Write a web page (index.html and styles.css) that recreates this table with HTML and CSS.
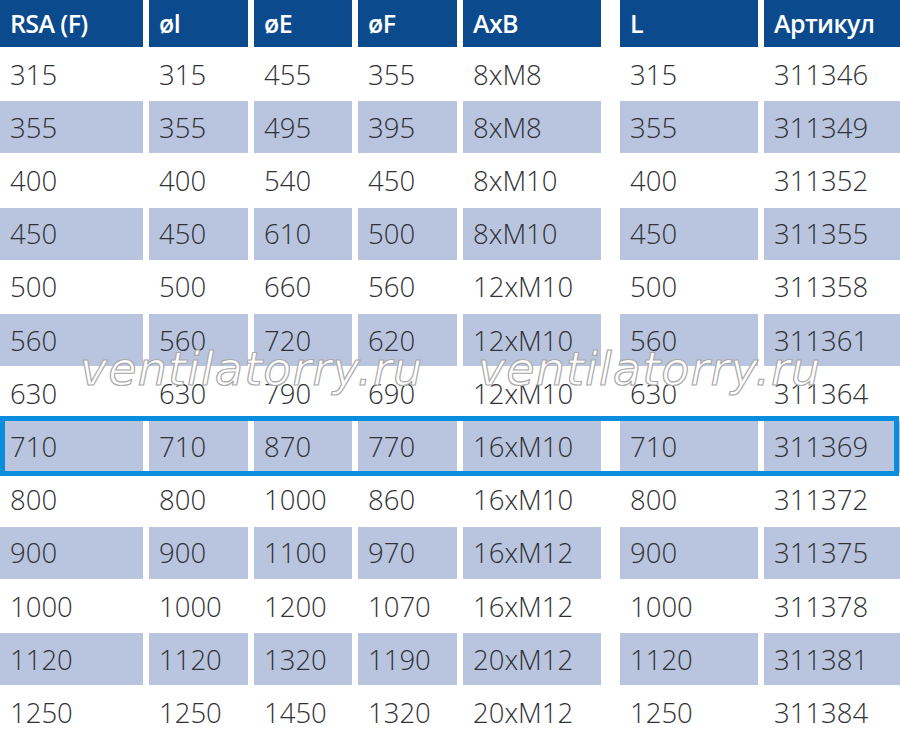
FILE: index.html
```html
<!DOCTYPE html>
<html lang="ru">
<head>
<meta charset="utf-8">
<link rel="stylesheet" href="styles.css">
</head>
<body>
<div class="table">
  <div class="row head">
    <div class="cell">RSA (F)</div><div class="cell">øl</div><div class="cell">øE</div><div class="cell">øF</div><div class="cell">AxB</div><div class="cell gapped">L</div><div class="cell">Артикул</div>
  </div>
  <div class="row"><div class="cell">315</div><div class="cell">315</div><div class="cell">455</div><div class="cell">355</div><div class="cell">8xM8</div><div class="cell gapped">315</div><div class="cell">311346</div></div>
  <div class="row alt"><div class="cell">355</div><div class="cell">355</div><div class="cell">495</div><div class="cell">395</div><div class="cell">8xM8</div><div class="cell gapped">355</div><div class="cell">311349</div></div>
  <div class="row"><div class="cell">400</div><div class="cell">400</div><div class="cell">540</div><div class="cell">450</div><div class="cell">8xM10</div><div class="cell gapped">400</div><div class="cell">311352</div></div>
  <div class="row alt"><div class="cell">450</div><div class="cell">450</div><div class="cell">610</div><div class="cell">500</div><div class="cell">8xM10</div><div class="cell gapped">450</div><div class="cell">311355</div></div>
  <div class="row"><div class="cell">500</div><div class="cell">500</div><div class="cell">660</div><div class="cell">560</div><div class="cell">12xM10</div><div class="cell gapped">500</div><div class="cell">311358</div></div>
  <div class="row alt"><div class="cell">560</div><div class="cell">560</div><div class="cell">720</div><div class="cell">620</div><div class="cell">12xM10</div><div class="cell gapped">560</div><div class="cell">311361</div></div>
  <div class="row"><div class="cell">630</div><div class="cell">630</div><div class="cell">790</div><div class="cell">690</div><div class="cell">12xM10</div><div class="cell gapped">630</div><div class="cell">311364</div></div>
  <div class="row alt selected"><div class="cell">710</div><div class="cell">710</div><div class="cell">870</div><div class="cell">770</div><div class="cell">16xM10</div><div class="cell gapped">710</div><div class="cell">311369</div></div>
  <div class="row"><div class="cell">800</div><div class="cell">800</div><div class="cell">1000</div><div class="cell">860</div><div class="cell">16xM10</div><div class="cell gapped">800</div><div class="cell">311372</div></div>
  <div class="row alt"><div class="cell">900</div><div class="cell">900</div><div class="cell">1100</div><div class="cell">970</div><div class="cell">16xM12</div><div class="cell gapped">900</div><div class="cell">311375</div></div>
  <div class="row"><div class="cell">1000</div><div class="cell">1000</div><div class="cell">1200</div><div class="cell">1070</div><div class="cell">16xM12</div><div class="cell gapped">1000</div><div class="cell">311378</div></div>
  <div class="row alt"><div class="cell">1120</div><div class="cell">1120</div><div class="cell">1320</div><div class="cell">1190</div><div class="cell">20xM12</div><div class="cell gapped">1120</div><div class="cell">311381</div></div>
  <div class="row"><div class="cell">1250</div><div class="cell">1250</div><div class="cell">1450</div><div class="cell">1320</div><div class="cell">20xM12</div><div class="cell gapped">1250</div><div class="cell">311384</div></div>
  <span class="watermark wm-left">ventilatorry.ru</span>
  <span class="watermark wm-right">ventilatorry.ru</span>
</div>
</body>
</html>
```

FILE: styles.css
```css
html, body {
  margin: 0;
  padding: 0;
  background: #ffffff;
}

body {
  width: 900px;
  height: 743px;
  overflow: hidden;
  font-family: "Open Sans", "Noto Sans", "DejaVu Sans", sans-serif;
}

.table {
  position: relative;
  display: flex;
  flex-direction: column;
  gap: 1.2px;
}

.row {
  display: grid;
  grid-template-columns: 143px 99px 98px 99px 138px 151px 1fr;
  column-gap: 6px;
  height: 52px;
  position: relative;
}

.cell {
  display: flex;
  align-items: center;
  padding-left: 10px;
  font-size: 27.5px;
  font-weight: 300;
  color: #2f3136;
  white-space: nowrap;
}

.cell.gapped {
  margin-left: 13px;
}

.head {
  height: 47px;
}

.head .cell {
  background: #0b4a8d;
  color: #ffffff;
  font-weight: 600;
  font-size: 25px;
  letter-spacing: -0.6px;
  padding-bottom: 2px;
}

.alt .cell {
  background: #b9c5de;
}

.selected::after {
  content: "";
  position: absolute;
  left: 0;
  right: 1px;
  top: -4.6px;
  bottom: -3.4px;
  border: 5px solid #0a8ddc;
  pointer-events: none;
}

.watermark {
  position: absolute;
  top: 346px;
  font-family: "DejaVu Sans", sans-serif;
  font-style: italic;
  font-weight: 400;
  font-size: 46px;
  line-height: 1;
  letter-spacing: 1.1px;
  color: #ffffff;
  -webkit-text-stroke: 1.2px #a9a9a9;
  pointer-events: none;
  white-space: nowrap;
}

.wm-left {
  left: 80px;
}

.wm-right {
  left: 478px;
}
```
